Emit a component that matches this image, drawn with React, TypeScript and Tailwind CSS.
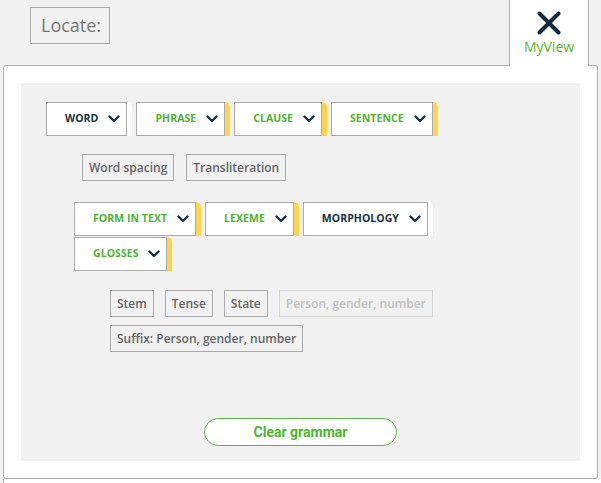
import React from "react";

type Dropdown = { label: string; active: boolean };

const NAVY = "text-[#17303f]";

function Chevron() {
  return (
    <svg width="12" height="8" viewBox="0 0 12 8" className="shrink-0">
      <path
        d="M1.5 1.5 6 6l4.5-4.5"
        fill="none"
        stroke="#17303f"
        strokeWidth="2.4"
        strokeLinecap="round"
        strokeLinejoin="round"
      />
    </svg>
  );
}

function DropButton({ label, active }: Dropdown) {
  return (
    <div
      className={`flex pr-[5px] rounded-tr-[5px] ${
        active ? "bg-[#fdd54b]" : "bg-white"
      }`}
    >
      <button
        type="button"
        className="h-[34px] flex items-center gap-[10px] pl-[18px] pr-[6px] bg-white border border-[#ababab]"
      >
        <span
          className={`text-[10.5px] font-bold tracking-[0.05px] ${
            active ? "text-[#4db52f]" : NAVY
          }`}
        >
          {label}
        </span>
        <Chevron />
      </button>
    </div>
  );
}

function Toggle({ label, disabled }: { label: string; disabled?: boolean }) {
  return (
    <button
      type="button"
      className={`h-[27px] px-[6px] border text-[12px] font-semibold ${
        disabled
          ? "border-[#d8d8d8] text-[#c0c0c0]"
          : "border-[#ababab] text-[#666]"
      }`}
    >
      {label}
    </button>
  );
}

export default function App() {
  return (
    <div
      className="w-[601px] h-[483px] bg-[#f1f1f1] overflow-hidden"
      style={{ fontFamily: '"Open Sans", "Liberation Sans", sans-serif' }}
    >
      <div className="flex justify-between items-start h-[65px]">
        <div className="ml-[30px] mt-[7px] h-[37px] w-[80px] border border-[#ababab] flex items-center pl-[10px] text-[18px] text-[#777]">
          Locate:
        </div>
        <div className="relative z-10 mr-[12px] w-[80px] h-[66px] bg-white border-l border-r border-[#ababab] flex flex-col items-center pt-[11px]">
          <svg width="24" height="24" viewBox="0 0 24 24">
            <path
              d="M2.5 2.5l19 19M21.5 2.5l-19 19"
              stroke="#0f2a3f"
              strokeWidth="4"
              strokeLinecap="round"
            />
          </svg>
          <span className="mt-[2px] text-[14px] text-[#5bb52f] leading-5">
            MyView
          </span>
        </div>
      </div>

      <div className="ml-[3px] w-[595px] h-[414px] border border-[#ababab] bg-white rounded-[3px] p-[17px]">
        <div className="h-[378px] bg-[#f1f1f1] pt-[19px] pl-[25px] flex flex-col">
          <div className="flex gap-[4px]">
            <DropButton label="WORD" active={false} />
            <DropButton label="PHRASE" active />
            <DropButton label="CLAUSE" active />
            <DropButton label="SENTENCE" active />
          </div>

          <div className="flex gap-[12px] ml-[36px] mt-[18px]">
            <Toggle label="Word spacing" />
            <Toggle label="Transliteration" />
          </div>

          <div className="flex flex-wrap gap-x-[4px] gap-y-[1px] ml-[28px] mt-[21px] w-[420px]">
            <DropButton label="FORM IN TEXT" active />
            <DropButton label="LEXEME" active />
            <DropButton label="MORPHOLOGY" active={false} />
            <DropButton label="GLOSSES" active />
          </div>

          <div className="flex flex-wrap gap-x-[11px] gap-y-[8px] ml-[64px] mt-[19px] w-[340px]">
            <Toggle label="Stem" />
            <Toggle label="Tense" />
            <Toggle label="State" />
            <Toggle label="Person, gender, number" disabled />
            <Toggle label="Suffix: Person, gender, number" />
          </div>

          <div className="flex justify-center pr-[25px] mt-[66px]">
            <button
              type="button"
              className="w-[193px] h-[28px] rounded-full bg-white border border-[#5cb545] text-[14px] font-bold text-[#4db52f]"
              style={{ fontFamily: "Roboto, Arial, sans-serif" }}
            >
              Clear grammar
            </button>
          </div>
        </div>
      </div>
      <div className="ml-[3px] h-[5px] bg-white border-l border-[#ababab]" />
    </div>
  );
}
